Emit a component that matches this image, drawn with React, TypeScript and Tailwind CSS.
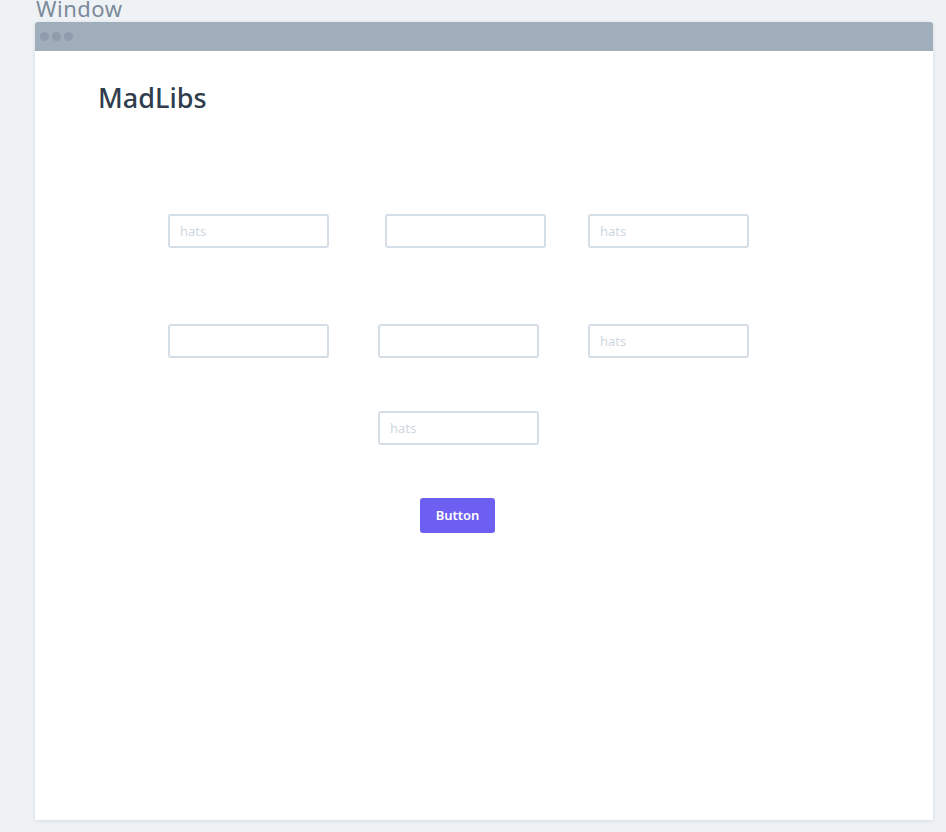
const font = { fontFamily: '"Noto Sans", "Open Sans", sans-serif' }

function Field({ placeholder, className = '' }: { placeholder?: string; className?: string }) {
  return (
    <input
      readOnly
      placeholder={placeholder}
      className={`h-[34px] w-[161px] rounded-[3px] border-2 border-[#d5dde6] bg-white px-[10px] text-[13px] placeholder:text-[#cfd8e2] outline-none ${className}`}
    />
  )
}

export default function App() {
  return (
    <div className="h-[832px] w-[946px] overflow-hidden bg-[#eff2f5]" style={font}>
      <div className="h-[22px] overflow-visible pl-[36px] text-[22px] leading-[16px] tracking-[0.5px] text-[#7b8a9b]">Window</div>
      <div className="ml-[35px] w-[898px] h-[798px] flex flex-col rounded-t-[3px] bg-white shadow-[0_1px_4px_rgba(160,174,192,0.35)]">
        <div className="h-[29px] shrink-0 rounded-t-[3px] bg-[#a0adbb] flex items-center gap-[3px] pl-[5px]">
          <span className="h-[9px] w-[9px] rounded-full bg-[#8f9cac]" />
          <span className="h-[9px] w-[9px] rounded-full bg-[#8f9cac]" />
          <span className="h-[9px] w-[9px] rounded-full bg-[#8f9cac]" />
        </div>
        <div className="flex flex-col">
          <h1 className="ml-[63px] mt-[30px] text-[27px] leading-[34px] font-medium text-[#2f3d4c]">MadLibs</h1>
          <div className="mt-[99px] flex pl-[133px]">
            <Field placeholder="hats" />
            <Field className="ml-[56px]" />
            <Field placeholder="hats" className="ml-[42px]" />
          </div>
          <div className="mt-[76px] flex pl-[133px]">
            <Field />
            <Field className="ml-[49px]" />
            <Field placeholder="hats" className="ml-[49px]" />
          </div>
          <div className="mt-[53px] flex pl-[343px]">
            <Field placeholder="hats" />
          </div>
          <div className="mt-[53px] flex pl-[385px]">
            <button className="h-[35px] w-[75px] rounded-[3px] bg-[#6c5ff2] text-[13px] font-semibold text-white">
              Button
            </button>
          </div>
        </div>
      </div>
    </div>
  )
}
